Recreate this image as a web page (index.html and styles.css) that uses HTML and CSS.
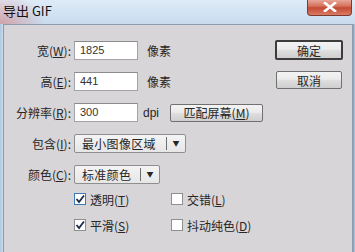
FILE: index.html
```html
<!DOCTYPE html>
<html>
	<head>
		<meta charset="UTF-8">
		<title>导出 GIF</title>
		<link rel="stylesheet" href="styles.css">
	</head>
	<body>
		<div id="win">
			<div class="titlebar">
				<span class="title">导出 GIF</span>
				<span class="close">
					<svg width="14" height="10" viewBox="0 0 14 10">
						<path d="M2 1 L12 9 M12 1 L2 9" stroke="#fff" stroke-width="2.6" stroke-linecap="square"/>
					</svg>
				</span>
			</div>
			<div class="panel">
				<div class="form">
					<div class="row">
						<span class="lbl">宽(<u>W</u>):</span>
						<span class="txt">1825</span>
						<span class="unit">像素</span>
					</div>
					<div class="row">
						<span class="lbl">高(<u>E</u>):</span>
						<span class="txt">441</span>
						<span class="unit">像素</span>
					</div>
					<div class="row">
						<span class="lbl">分辨率(<u>R</u>):</span>
						<span class="txt">300</span>
						<span class="unit dpi">dpi</span>
						<span class="btn match">匹配屏幕(<u>M</u>)</span>
					</div>
					<div class="row">
						<span class="lbl">包含(<u>I</u>):</span>
						<span class="select wide">
							<span class="val">最小图像区域</span>
							<span class="arrow">▼</span>
						</span>
					</div>
					<div class="row">
						<span class="lbl">颜色(<u>C</u>):</span>
						<span class="select">
							<span class="val">标准颜色</span>
							<span class="arrow">▼</span>
						</span>
					</div>
					<div class="checks">
						<span class="chk on focus"><i class="box"><svg width="10" height="10" viewBox="0 0 10 10"><path d="M1.5 5 L4 8 L9 1.5" stroke="#1c2a4a" stroke-width="1.8" fill="none"/></svg></i>透明(<u>T</u>)</span>
						<span class="chk"><i class="box"></i>交错(<u>L</u>)</span>
						<span class="chk on"><i class="box"><svg width="10" height="10" viewBox="0 0 10 10"><path d="M1.5 5 L4 8 L9 1.5" stroke="#1c2a4a" stroke-width="1.8" fill="none"/></svg></i>平滑(<u>S</u>)</span>
						<span class="chk"><i class="box"></i>抖动纯色(<u>D</u>)</span>
					</div>
				</div>
				<div class="side">
					<span class="btn ok">确定</span>
					<span class="btn">取消</span>
				</div>
			</div>
		</div>
	</body>
</html>
```

FILE: styles.css
```css
*{margin: 0;padding: 0;box-sizing: border-box;}
body{font-size: 12px;font-family: "Noto Sans CJK SC", "Liberation Sans", sans-serif;color: #262626;}
u{text-decoration: underline;text-underline-offset: 1px;}
#win{
	width: 355px;
	height: 252px;
	overflow: hidden;
	background: linear-gradient(to right, #aec6de 0, #c9dcee 3px, #c9dcee 352px, #6f8aa6 353px, #a9c1d8 354px);
	display: flex;
	flex-direction: column;
}
.titlebar{
	height: 24px;
	flex: none;
	display: flex;
	align-items: flex-start;
	background:
		radial-gradient(ellipse 45px 34px at 0 26px, rgba(214,120,120,0.6), rgba(214,120,120,0) 100%),
		linear-gradient(to bottom, #deebf7, #c8dbee);
	position: relative;
}
.title{
	font-size: 13px;
	line-height: 22px;
	padding-left: 3px;
	color: #111;
}
.close{
	position: absolute;
	right: 3px;
	top: -1px;
	width: 45px;
	height: 17px;
	border: 1px solid #7d3a31;
	border-top: 0;
	border-radius: 0 0 4px 4px;
	background: linear-gradient(to bottom, #eab0a3, #d6705b 45%, #c44a33 55%, #d97c63);
	display: flex;
	align-items: center;
	justify-content: center;
}
.panel{
	flex: 1;
	margin: 0 2px 0 3px;
	border: 1px solid #8c9cae;
	border-bottom: 0;
	background: #d8d5d9;
	display: flex;
	padding-top: 16px;
}
.form{
	display: flex;
	flex-direction: column;
	gap: 12px;
}
.row{
	display: flex;
	align-items: center;
	height: 19px;
}
.lbl{
	width: 67px;
	margin-right: 3px;
	text-align: right;
	white-space: nowrap;
}
.txt{
	width: 64px;
	height: 19px;
	background: #fff;
	border: 1px solid #a3a3a3;
	border-top-color: #8c8c8c;
	padding-left: 5px;
	font-family: "Liberation Sans", sans-serif;
	font-size: 11px;
	line-height: 17px;
	color: #333;
}
.unit{margin-left: 9px;}
.dpi{margin-left: 5px;font-family: "Liberation Sans", sans-serif;font-size: 12px;}
.btn{
	display: flex;
	align-items: center;
	justify-content: center;
	border: 1px solid #707070;
	border-radius: 2px;
	background: linear-gradient(to bottom, #f3f3f3, #ebebeb 45%, #dddddd 55%, #cfcfcf);
	white-space: nowrap;
}
.match{
	margin-left: 11px;
	width: 93px;
	height: 18px;
}
.select{
	width: 86px;
	height: 19px;
	display: flex;
	align-items: center;
	border: 1px solid #8f8f8f;
	border-radius: 2px;
	background: linear-gradient(to bottom, #f4f4f4, #e6e6e6);
}
.select.wide{width: 112px;}
.val{
	flex: 1;
	padding-left: 7px;
	letter-spacing: 0.3px;
}
.arrow{
	width: 19px;
	height: 13px;
	border-left: 1px solid #6e6e6e;
	font-size: 7px;
	line-height: 13px;
	text-align: center;
}
.checks{
	margin-top: -4px;
	margin-left: 70px;
	display: grid;
	grid-template-columns: 97px auto;
	grid-auto-rows: 14px;
	row-gap: 12px;
}
.chk{
	display: flex;
	align-items: center;
	white-space: nowrap;
}
.box{
	width: 12px;
	height: 12px;
	border: 1px solid #8e8f8f;
	background: #fff;
	margin-right: 4px;
	display: flex;
	align-items: center;
	justify-content: center;
}
.focus .box{border-color: #3d7bb7;}
.side{
	margin-left: auto;
	margin-top: -1px;
	padding-right: 9px;
	display: flex;
	flex-direction: column;
	align-items: center;
	gap: 11px;
}
.side .btn{
	width: 66px;
	height: 18px;
}
.side .ok{
	width: 68px;
	height: 20px;
	border: 2px solid #3c3c3c;
}
```
